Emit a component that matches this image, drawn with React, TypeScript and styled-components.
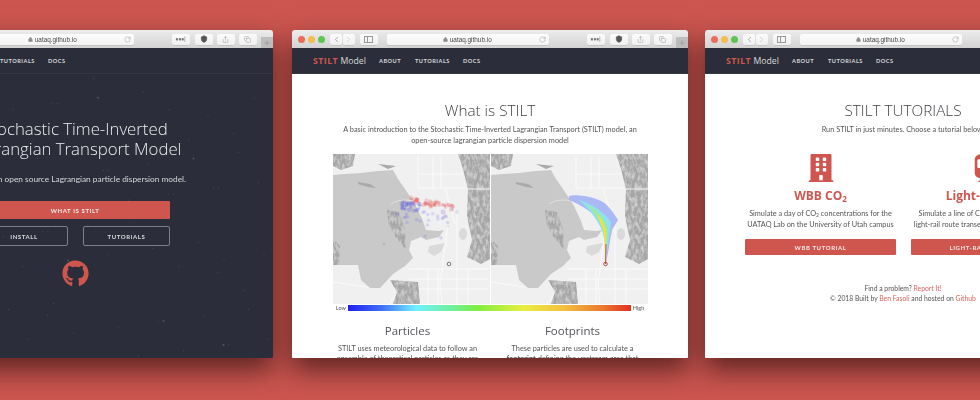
import React from "react";
import styled, { createGlobalStyle } from "styled-components";
import { FaGithub, FaBuilding, FaTrain } from "react-icons/fa";
import { RotateCw, ChevronLeft, ChevronRight, Lock, Share, Copy, ShieldCheck, Plus } from "lucide-react";

const Global = createGlobalStyle`
  html, body { margin: 0; padding: 0; width: 980px; height: 400px; overflow: hidden; background: #cd5650; }
  * { box-sizing: border-box; }
`;

const Desktop = styled.main`
  position: relative; width: 980px; height: 400px; overflow: hidden; background: #cd5650;
  font-family: Lato, "Liberation Sans", sans-serif;
`;
const Win = styled.section<{ $left: number }>`
  position: absolute; left: ${p => p.$left}px; top: 30px; width: 396px; height: 328px;
  border-radius: 3px 3px 1px 1px; overflow: hidden; display: flex; flex-direction: column;
  filter: blur(0.4px);
`;
const Shadow = styled.div<{ $left: number }>`
  position: absolute; left: ${p => p.$left}px; top: 30px; width: 396px; height: 328px;
  box-shadow: 0 12px 26px rgba(20, 5, 5, 0.62);
`;
const Chrome = styled.header`
  height: 18px; flex: none; display: flex; align-items: center; position: relative;
  background: linear-gradient(#ececec, #d3d3d3); padding-left: 6px;
`;
const Dot = styled.i<{ $c: string }>`
  width: 7px; height: 7px; border-radius: 50%; background: ${p => p.$c}; margin-right: 3px; flex: none;
`;
const ToolBtn = styled.div<{ $w: number; $ml?: number }>`
  width: ${p => p.$w}px; height: 11px; margin-left: ${p => p.$ml ?? 0}px; flex: none;
  background: linear-gradient(#fbfbfb, #f0f0f0); border-radius: 2px;
  display: flex; align-items: center; justify-content: center; color: #777;
  box-shadow: 0 0.5px 0.5px rgba(0,0,0,.18);
  font-size: 5px; letter-spacing: 0; font-weight: 700;
`;
const Address = styled.div`
  width: 162px; height: 11px; margin-left: 9px; flex: none; background: linear-gradient(#fdfdfd,#f3f3f3);
  border-radius: 2px; box-shadow: 0 0.5px 0.5px rgba(0,0,0,.18);
  display: flex; align-items: center; justify-content: center; position: relative;
  font-size: 6.4px; color: #444; font-family: "Liberation Sans", sans-serif; gap: 1.5px;
`;
const Reload = styled.span`
  position: absolute; right: 3px; top: 2px; display: flex; color: #888;
`;
const NewTab = styled.div`
  position: absolute; right: 0; bottom: 0; width: 12px; height: 11px; background: #bdbdbd; color: #777;
  display: flex; align-items: center; justify-content: center;
`;
const Nav = styled.nav`
  height: 26px; flex: none; background: #2b2e3a; display: flex; align-items: center; padding-left: 21px;
  border-bottom: 1px solid #34363f;
`;
const Brand = styled.div`
  font-family: "Open Sans", sans-serif; font-size: 8.7px; color: #d8d8d8; width: 66px; white-space: nowrap;
  b { color: #cf564f; font-weight: 700; letter-spacing: 0.5px; }
`;
const NavLink = styled.span<{ $w: number }>`
  width: ${p => p.$w}px; font-size: 5.6px; font-weight: 700; letter-spacing: 0.5px; color: #d9d9dd; flex: none;
`;
const Dark = styled.div`
  flex: 1; background: #2b2e3a; position: relative; display: flex; flex-direction: column; align-items: center;
  padding-top: 45px;
`;
const Stars = styled.svg`
  position: absolute; inset: 0; width: 100%; height: 100%;
`;
const HeroTitle = styled.h1`
  position: relative; margin: 0; font: 300 16.8px/20px "Open Sans", sans-serif; color: #eceded; text-align: center;
`;
const HeroSub = styled.p`
  position: relative; margin: 15px 0 0; font-size: 8.3px; line-height: 11px; color: #d6d6da; white-space: nowrap;
`;
const ButtonCol = styled.div`
  position: relative; width: 190px; margin-top: 16px; display: grid; grid-template-columns: 88px 87px; column-gap: 15px; row-gap: 7px;
`;
const PrimaryBtn = styled.div<{ $wide?: boolean }>`
  ${p => p.$wide ? "grid-column: 1 / -1;" : ""}
  height: 18px; background: #cf564f; border-radius: 1px; color: #f5e8e6; display: flex; align-items: center; justify-content: center;
  font-size: 6px; font-weight: 700; letter-spacing: 0.6px; white-space: nowrap;
`;
const GhostBtn = styled.div`
  height: 20px; border: 1px solid #7e818c; border-radius: 2px; color: #d9d9dd; display: flex; align-items: center; justify-content: center;
  font-size: 6px; font-weight: 700; letter-spacing: 0.6px;
`;
const GithubMark = styled.div`
  position: relative; margin-top: 14px; color: #cf564f; display: flex;
`;
const Light = styled.div`
  flex: 1; background: #fff; display: flex; flex-direction: column; align-items: center; padding-top: 26px; color: #555;
  overflow: hidden;
`;
const Title = styled.h2`
  margin: 0; font: 300 15.3px/20px "Open Sans", sans-serif; color: #3f3f44; white-space: nowrap;
`;
const Lead = styled.p`
  margin: 4px 0 0; font-size: 7.35px; line-height: 11px; text-align: center; color: #555; white-space: nowrap;
`;
const MapRow = styled.div`
  margin-top: 8px; display: flex; gap: 1px; flex: none;
`;
const LegendRow = styled.div`
  display: flex; align-items: center; gap: 2px; font-size: 5.5px; color: #555; width: 340px; margin-top: 1px; justify-content: center; height: 7px;
`;
const Bar = styled.div`
  width: 283px; height: 6px;
  background: linear-gradient(90deg,#2020ee 0%,#4070f5 12%,#70f0ff 24%,#70f090 38%,#80ee40 46%,#e8ee40 62%,#f4c040 76%,#ea7a30 90%,#e03020 100%);
`;
const Cols = styled.div`
  margin-top: 13px; display: grid; grid-template-columns: 165px 165px; column-gap: 0; text-align: center; width: 330px;
`;
const ColHead = styled.h3`
  margin: 0; font: 400 11.5px/14px "Open Sans", sans-serif; color: #55555a;
`;
const ColText = styled.p`
  margin: 6px 0 0; font-size: 7.35px; line-height: 9.5px; color: #555; white-space: nowrap;
  b { font-weight: 700; }
`;
const TutorialCols = styled.div`
  margin-top: 19px; display: grid; grid-template-columns: 151px 151px; column-gap: 15px; width: 317px; text-align: center; align-self: flex-start; margin-left: 40px;
`;
const TutorialCol = styled.div`
  display: flex; flex-direction: column; align-items: center;
`;
const TutorialIcon = styled.div`
  color: #cf564f; display: flex; height: 28px;
`;
const TutorialName = styled.h3`
  margin: 6px 0 0; font: 700 12px/16px "Open Sans", sans-serif; color: #cf564f; white-space: nowrap;
  sub { font-size: 8px; line-height: 0; vertical-align: -2px; }
`;
const TutorialText = styled.p`
  margin: 5px 0 0; font-size: 7.3px; line-height: 10.5px; color: #555; white-space: nowrap;
  sub { font-size: 5px; line-height: 0; vertical-align: -1px; }
`;
const TutorialBtn = styled(PrimaryBtn)`
  width: 151px; height: 16px; margin-top: 9px;
`;
const Footer = styled.footer`
  margin-top: 29px; font-size: 6.8px; line-height: 9.5px; text-align: center; color: #555; white-space: nowrap;
  a { color: #d9655e; text-decoration: none; }
`;

const stars = Array.from({ length: 90 }, (_, i) => ({
  x: (i * 137.5 + 23 * (i % 7)) % 396,
  y: (i * 71.3 + 13 * (i % 5)) % 284,
  r: i % 9 === 0 ? 1 : 0.5,
}));

const toolbar = () => (
  <Chrome>
    <Dot $c="#ee6a5f" /><Dot $c="#f5bd4f" /><Dot $c="#61c454" />
    <ToolBtn $w={12} $ml={2}><ChevronLeft size={9} strokeWidth={1.5} /></ToolBtn>
    <ToolBtn $w={12} $ml={0.5}><ChevronRight size={9} strokeWidth={1.5} color="#bbb" /></ToolBtn>
    <ToolBtn $w={18} $ml={5}>
      <svg width="9" height="7" viewBox="0 0 9 7"><rect x=".5" y=".5" width="8" height="6" fill="none" stroke="#999" /><path d="M3.5 .5v6" stroke="#999" /></svg>
    </ToolBtn>
    <Address>
      <Lock size={5} fill="#888" color="#888" />uataq.github.io
      <Reload><RotateCw size={7} strokeWidth={1.3} /></Reload>
    </Address>
    <ToolBtn $w={18} $ml={38}>•••|</ToolBtn>
    <ToolBtn $w={18} $ml={5}><ShieldCheck size={8} fill="#555" color="#555" /></ToolBtn>
    <ToolBtn $w={18} $ml={4}><Share size={7} strokeWidth={1.2} /></ToolBtn>
    <ToolBtn $w={18} $ml={4}><Copy size={7} strokeWidth={1.2} /></ToolBtn>
    <NewTab><Plus size={8} strokeWidth={1} /></NewTab>
  </Chrome>
);

const nav = () => (
  <Nav>
    <Brand><b>STILT</b> Model</Brand>
    <NavLink $w={36}>ABOUT</NavLink>
    <NavLink $w={48}>TUTORIALS</NavLink>
    <NavLink $w={30}>DOCS</NavLink>
  </Nav>
);

const rnd = (s: number) => { const v = Math.sin(s * 12.9898) * 43758.5453; return v - Math.floor(v); };
const seeded = (n: number, seed: number, f: (a: number, b: number, i: number) => [number, number, number, string]) =>
  Array.from({ length: n }, (_, i) => f(rnd(seed + i * 1.7), rnd(seed + i * 3.1 + 50), i));
const particles: [number, number, number, string][] = [
  ...seeded(50, 1, (a, b, i) => [78 + a * 44, 43 + b * 6 + a * 8, 1.4 + (i % 3) * 0.4, "#e83838"]),
  ...seeded(24, 2, (a, b, i) => [68 + a * 20, 46 + b * 11, 1.6 + (i % 2) * 0.5, "#3434e8"]),
  ...seeded(10, 3, (a, b) => [60 + a * 24, 50 + b * 18, 1.8, "#6060ee"]),
  ...seeded(18, 4, (a, b) => [70 + a * 46, 55 + b * 30, 1.8, "#7070ee"]),
  [110, 58, 2.5, "#9040c0"], [112, 62, 2, "#9050c0"], [124, 58, 2, "#a0a0f0"], [118, 54, 2, "#a0a0f0"], [115, 72, 1.5, "#e09090"], [51, 90, 1.5, "#7070e0"],
];

const MapBase = () => (
  <>
    <rect width="157" height="150" fill="#f0f0f0" />
    <g stroke="#fafafa" strokeWidth="0.9" fill="none">
      <path d="M85 2v32M100 2v34M108 2v32M85 20h45M85 34h48M112 34l6 20 4 16M115 70l-8 60 2 20M124 60v90M76 115h80M76 125h80M80 135h76M95 115v35M105 115v35M135 115v35M70 130l-14 20M0 128l40 6" />
    </g>
    <path fill="#c9c9c9" d="M0 21L12 20 28 19 45 17 60 16 65 25 72 35 78 44 83 52 90 67 93 76 106 77 111 76 106 83 93 86 88 83 78 87 76 96 80 104 72 112 60 120 47 134 37 134 28 126 25 111 0 111Z" />
    <path d="M58 50C64 46 72 45 80 47" stroke="#e6e6e6" strokeWidth=".8" fill="none" />
    <path fill="#dadada" d="M96 92l16-3-4 9-7 4-6-4Z" />
    <ellipse cx="130" cy="80" rx="4" ry="6" fill="#dadada" />
    <g filter="url(#rough)" fill="#8f8f8f">
      <path d="M125 0H157V105L148 110 134 103 139 86 134 62 135 35 130 15Z" />
      <path d="M54 56L66 58 72 75 73 96 62 82 56 72Z" />
      <path d="M57 126L85 128 87 150H60L64 138Z" />
      <path d="M2 0H22L20 12 8 16 0 12V0Z" />
      <path d="M0 85L7 92 6 111 0 111Z" />
    </g>
    <path d="M135 35H157" stroke="#f4f4f4" strokeWidth="1" />
    <path d="M25 28l12 2 6 4-8-1-10-3ZM45 10l18 2-8 3Z" fill="#aaa" />
  </>
);

const Maps = () => (
  <MapRow>
    <svg width="157" height="150" viewBox="0 0 157 150" role="img" aria-label="Particles">
      <defs>
        <filter id="rough" x="0" y="0" width="100%" height="100%">
          <feTurbulence type="fractalNoise" baseFrequency="0.32 0.16" numOctaves="3" seed="7" result="n" />
          <feColorMatrix in="n" type="matrix" values="0 0 0 0 .38  0 0 0 0 .38  0 0 0 0 .38  2.8 0 0 0 -.7" result="m" />
          <feFlood floodColor="#cfcfcf" result="f" />
          <feMerge result="c"><feMergeNode in="f" /><feMergeNode in="m" /></feMerge>
          <feComposite in="c" in2="SourceGraphic" operator="in" />
        </filter>
      </defs>
      <MapBase />
      {particles.map(([x, y, r, c], i) => <circle key={i} cx={x} cy={y} r={r} fill={c} opacity=".2" />)}
      <circle cx="116" cy="110" r="1.8" fill="none" stroke="#444" strokeWidth=".7" />
    </svg>
    <svg width="157" height="150" viewBox="0 0 157 150" role="img" aria-label="Footprints">
      <MapBase />
      <path d="M78 42C84 40 100 42 110 47 116 50 121 56 127 66 124 71 122 74 121 76 119 86 117 100 115 109 116 100 116 96 116 92 114 80 108 68 103 61 96 55 88 50 78 46Z" fill="#a4b4f4" opacity=".92" />
      <path d="M88 46C98 49 112 56 120 68 119 78 117 92 115 108 115 94 114 84 110 74 104 62 96 53 88 46Z" fill="#8fe0f0" />
      <path d="M96 50C106 56 114 64 117 76 116 86 115 96 114.5 108 114 92 114 82 110 71 106 63 102 56 96 50Z" fill="#a0ee90" />
      <path d="M106 60C112 66 115 74 115.5 82 115 90 114.5 100 114.5 108 114 96 114 84 112 75Z" fill="#f0e050" />
      <path d="M115 90L114.5 110" stroke="#e85030" strokeWidth="1.1" />
      <circle cx="114.5" cy="110" r="1.8" fill="none" stroke="#a03030" strokeWidth=".8" />
    </svg>
  </MapRow>
);

export default function App() {
  return (
    <Desktop>
      <Global />
      <Shadow $left={-123} /><Shadow $left={292} /><Shadow $left={705} />
      <Win $left={-123}>
        {toolbar()}
        {nav()}
        <Dark>
          <Stars viewBox="0 0 396 284" aria-hidden="true">
            {stars.map((s, i) => <circle key={i} cx={s.x} cy={s.y} r={s.r} fill="#4f525f" />)}
          </Stars>
          <HeroTitle>Stochastic Time-Inverted<br />Lagrangian Transport Model</HeroTitle>
          <HeroSub>STILT is an open source Lagrangian particle dispersion model.</HeroSub>
          <ButtonCol>
            <PrimaryBtn $wide>WHAT IS STILT</PrimaryBtn>
            <GhostBtn>INSTALL</GhostBtn>
            <GhostBtn>TUTORIALS</GhostBtn>
          </ButtonCol>
          <GithubMark><FaGithub size={27} /></GithubMark>
        </Dark>
      </Win>
      <Win $left={292}>
        {toolbar()}
        {nav()}
        <Light>
          <Title>What is STILT</Title>
          <Lead>
            A basic introduction to the Stochastic Time-Inverted Lagrangian Transport (STILT) model, an<br />
            open-source lagrangian particle dispersion model
          </Lead>
          <Maps />
          <LegendRow>Low<Bar />High</LegendRow>
          <Cols>
            <div>
              <ColHead>Particles</ColHead>
              <ColText>STILT uses meteorological data to follow an<br />ensemble of theoretical particles as they are</ColText>
            </div>
            <div>
              <ColHead>Footprints</ColHead>
              <ColText>These particles are used to calculate a<br /><b>footprint</b> defining the upstream area that</ColText>
            </div>
          </Cols>
        </Light>
      </Win>
      <Win $left={705}>
        {toolbar()}
        {nav()}
        <Light>
          <Title>STILT TUTORIALS</Title>
          <Lead>Run STILT in just minutes. Choose a tutorial below.</Lead>
          <TutorialCols>
            <TutorialCol>
              <TutorialIcon><FaBuilding size={28} /></TutorialIcon>
              <TutorialName>WBB CO<sub>2</sub></TutorialName>
              <TutorialText>Simulate a day of CO<sub>2</sub> concentrations for the<br />UATAQ Lab on the University of Utah campus</TutorialText>
              <TutorialBtn>WBB TUTORIAL</TutorialBtn>
            </TutorialCol>
            <TutorialCol>
              <TutorialIcon><FaTrain size={28} /></TutorialIcon>
              <TutorialName>Light-Rail CO<sub>2</sub></TutorialName>
              <TutorialText>Simulate a line of CO<sub>2</sub> concentrations for a<br />light-rail route transect through Salt Lake City</TutorialText>
              <TutorialBtn>LIGHT-RAIL TUTORIAL</TutorialBtn>
            </TutorialCol>
          </TutorialCols>
          <Footer>
            Find a problem? <a>Report It!</a><br />
            © 2018 Built by <a>Ben Fasoli</a> and hosted on <a>Github</a>
          </Footer>
        </Light>
      </Win>
    </Desktop>
  );
}
